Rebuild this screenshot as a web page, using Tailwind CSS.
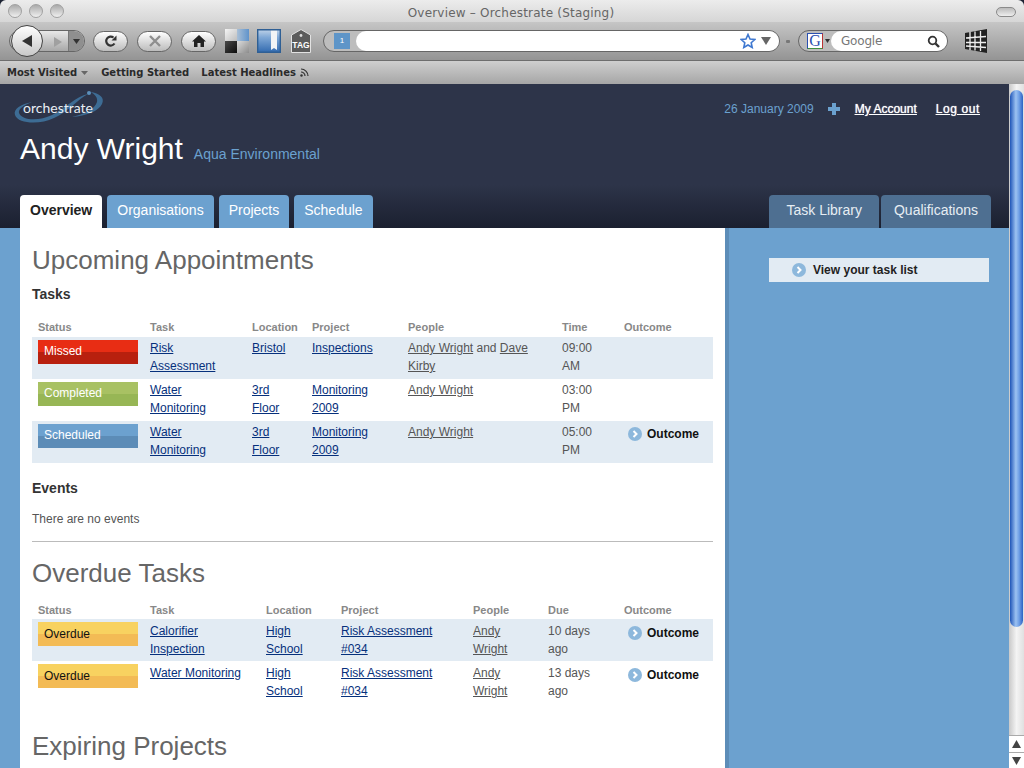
<!DOCTYPE html>
<html>
<head>
<meta charset="UTF-8">
<title>Overview - Orchestrate (Staging)</title>
<script src="https://cdn.jsdelivr.net/npm/@tailwindcss/browser@4"></script>
</head>
<body class="w-[1024px] h-[768px] overflow-hidden bg-[#1c2233] font-['Liberation_Sans',Arial,sans-serif] text-[12px] leading-[18px] text-[#555]">

<!-- browser chrome -->
<div class="h-[84px] flex flex-col rounded-t-[6px] overflow-hidden">
    <div class="h-[22px] shrink-0 relative flex items-center justify-center pt-[3px] pr-[2px] bg-gradient-to-b from-[#ececec] to-[#d6d6d6] font-['DejaVu_Sans',sans-serif] text-[12px] tracking-[0.2px] text-[#666]">
        <div class="absolute left-[8px] top-[4px] flex gap-[7px]">
            <span class="w-[14px] h-[14px] rounded-full border border-[#a0a0a0] bg-gradient-to-b from-[#aaa] to-[#f0f0f0]"></span>
            <span class="w-[14px] h-[14px] rounded-full border border-[#a0a0a0] bg-gradient-to-b from-[#aaa] to-[#f0f0f0]"></span>
            <span class="w-[14px] h-[14px] rounded-full border border-[#a0a0a0] bg-gradient-to-b from-[#aaa] to-[#f0f0f0]"></span>
        </div>
        <span>Overview – Orchestrate (Staging)</span>
        <span class="absolute right-[8px] top-[7px] w-[20px] h-[10px] rounded-full border border-[#8a8a8a] bg-gradient-to-b from-[#bbb] to-[#eee]"></span>
    </div>

    <div class="h-[39px] shrink-0 flex items-center pl-[9px] bg-gradient-to-b from-[#c6c6c6] to-[#949494] border-b border-[#6e6e6e]">
        <!-- back / forward -->
        <div class="relative w-[76px] h-[22px] rounded-full border border-[#666] bg-gradient-to-b from-[#e8e8e8] to-[#a8a8a8]">
            <div class="absolute left-[1px] top-[-6px] w-[32px] h-[32px] rounded-full border border-[#444] bg-gradient-to-b from-white to-[#c8c8c8] flex items-center justify-center">
                <svg width="12" height="14" viewBox="0 0 12 14"><path d="M11 1v12L1 7z" fill="#333"/></svg>
            </div>
            <svg class="absolute left-[43px] top-[5px]" width="10" height="12" viewBox="0 0 10 12"><path d="M1 1v10l8-5z" fill="#a0a0a0"/></svg>
            <div class="absolute right-0 top-0 w-[16px] h-full rounded-r-full bg-[#8f8f8f] border-l border-[#777]"></div>
            <svg class="absolute right-[4px] top-[8px]" width="7" height="5" viewBox="0 0 7 5"><path d="M0 0h7L3.500 5z" fill="#333"/></svg>
        </div>
        <!-- reload -->
        <div class="ml-[8px] w-[35px] h-[21px] rounded-full border border-[#666] bg-gradient-to-b from-white to-[#bcbcbc] flex items-center justify-center">
            <svg width="14" height="14" viewBox="0 0 14 14" fill="none"><path d="M10.500 9.500A4.500 4.500 0 1 1 9.500 3.500" stroke="#333" stroke-width="2.200"/><path d="M7.500 6.500h5v-5z" fill="#333"/></svg>
        </div>
        <!-- stop -->
        <div class="ml-[9px] w-[35px] h-[21px] rounded-full border border-[#666] bg-gradient-to-b from-white to-[#bcbcbc] flex items-center justify-center">
            <svg width="12" height="12" viewBox="0 0 12 12"><path d="M1 1l10 10M11 1L1 11" stroke="#8f8f8f" stroke-width="2.400"/></svg>
        </div>
        <!-- home -->
        <div class="ml-[9px] w-[35px] h-[21px] rounded-full border border-[#666] bg-gradient-to-b from-white to-[#bcbcbc] flex items-center justify-center">
            <svg width="14" height="12" viewBox="0 0 14 12"><path d="M7 0L0 6.500h2V12h3.500V8h3v4H12V6.500h2z" fill="#222"/></svg>
        </div>
        <!-- delicious -->
        <svg class="ml-[9px]" width="24" height="24" viewBox="0 0 24 24">
            <defs>
                <linearGradient id="dw" x1="0" y1="0" x2="1" y2="1"><stop offset="0" stop-color="#f4f4f4"/><stop offset="1" stop-color="#bdbdbd"/></linearGradient>
                <linearGradient id="db" x1="0" y1="0" x2="1" y2="0"><stop offset="0" stop-color="#a9bfd6"/><stop offset="1" stop-color="#5f93cb"/></linearGradient>
                <linearGradient id="dk" x1="0" y1="0" x2="1" y2="1"><stop offset="0" stop-color="#4a4a4a"/><stop offset="1" stop-color="#0c0c0c"/></linearGradient>
                <linearGradient id="dg" x1="0" y1="0" x2="1" y2="1"><stop offset="0" stop-color="#dcdcdc"/><stop offset="1" stop-color="#8c8c8c"/></linearGradient>
            </defs>
            <path d="M0 0h12v12H0z" fill="url(#dw)"/><path d="M12 0h12v12H12z" fill="url(#db)"/><path d="M0 12h12v12H0z" fill="url(#dk)"/><path d="M12 12h12v12H12z" fill="url(#dg)"/>
        </svg>
        <!-- bookmark -->
        <svg class="ml-[8px]" width="24" height="24" viewBox="0 0 24 24"><defs><linearGradient id="bk" x1="0" y1="0" x2="0" y2="1"><stop offset="0" stop-color="#c4d6ea"/><stop offset="0.35" stop-color="#7fa8d6"/><stop offset="1" stop-color="#2f68ae"/></linearGradient></defs><path d="M0 0h24v24H0z" fill="url(#bk)"/><path d="M14 0h6v21l-3-2-3 2z" fill="#f2f4f6"/><path d="M.7.700h22.600v22.600H.7z" fill="none" stroke="#2f5f94" stroke-width="1.400"/></svg>
        <!-- tag -->
        <svg class="ml-[10px]" width="20" height="24" viewBox="0 0 20 24"><path d="M10 .5L19.500 6v17.500H.5V6z" fill="#5c5c5c" stroke="#e2e2e2"/><circle cx="10" cy="6.500" r="1.400" fill="#ddd"/><text x="10" y="19" text-anchor="middle" font-family="Liberation Sans" font-size="8.500" font-weight="bold" fill="#fff">TAG</text></svg>
        <!-- url bar -->
        <div class="ml-[12px] w-[457px] h-[22px] rounded-full border border-[#666] bg-[#bdbdbd] flex items-center">
            <span class="ml-[10px] w-[16px] h-[16px] bg-[#5e95c8] text-white text-[8px] leading-[16px] text-center">1</span>
            <div class="ml-[6px] flex-1 h-[20px] rounded-full bg-white flex items-center justify-end pr-[8px] gap-[5px]">
                <svg width="16" height="16" viewBox="0 0 16 16"><path d="M8 1.500l2 4.500 4.800.500-3.600 3.200 1 4.800L8 12l-4.200 2.500 1-4.800L1.200 6.500 6 6z" fill="#fff" stroke="#3f78d0" stroke-width="1.600"/></svg>
                <svg width="10" height="8" viewBox="0 0 10 8"><path d="M0 0h10L5 8z" fill="#666"/></svg>
            </div>
        </div>
        <span class="ml-[6px] w-[4px] h-[3px] bg-[#777] rounded-[1px]"></span>
        <!-- search -->
        <div class="ml-[8px] w-[150px] h-[22px] rounded-full border border-[#666] bg-[#bdbdbd] flex items-center">
            <span class="ml-[8px] w-[16px] h-[16px] bg-white border border-[#3f8f3f] border-r-[#b33] border-t-[#2a50b0] border-l-[#2a50b0] font-['Liberation_Serif',serif] text-[16px] leading-[14px] text-center text-[#2a50b0]">G</span>
            <svg class="ml-[2px]" width="5" height="4" viewBox="0 0 5 4"><path d="M0 0h5L2.500 4z" fill="#333"/></svg>
            <div class="ml-[1px] flex-1 h-[20px] rounded-full bg-white flex items-center justify-between pl-[10px] pr-[7px] font-['DejaVu_Sans',sans-serif] text-[12px] tracking-[-0.2px] text-[#777]">
                <span>Google</span>
                <svg width="13" height="13" viewBox="0 0 13 13" fill="none"><circle cx="5.500" cy="5.500" r="3.800" stroke="#333" stroke-width="1.800"/><path d="M8.500 8.500l3.500 3.500" stroke="#333" stroke-width="2.400"/></svg>
            </div>
        </div>
        <!-- grid icon -->
        <svg class="ml-[17px]" width="22" height="24" viewBox="0 0 22 24"><path d="M0 4l22-4v24L0 20z" fill="#222"/><path d="M5 3v18M10 2.500v19M15.500 2v20M1 9l20-1.500M1 13.500h20M1 17l20 1.500" stroke="#eee" stroke-width="1.300"/></svg>
    </div>

    <div class="h-[23px] shrink-0 flex items-center pl-[7px] bg-gradient-to-b from-[#cfcfcf] to-[#a6a6a6] font-['DejaVu_Sans',sans-serif] font-bold text-[10px] text-[#2a2a2a]">
        <span>Most Visited</span>
        <svg class="ml-[4px]" width="7" height="4" viewBox="0 0 7 4"><path d="M0 0h7L3.500 4z" fill="#666"/></svg>
        <span class="ml-[13px]">Getting Started</span>
        <span class="ml-[12px]">Latest Headlines</span>
        <svg class="ml-[4px]" width="9" height="9" viewBox="0 0 9 9" fill="none"><circle cx="1.500" cy="7.500" r="1.200" fill="#333"/><path d="M1 4a4 4 0 0 1 4 4M1 1a7 7 0 0 1 7 7" stroke="#333" stroke-width="1.200"/></svg>
    </div>
</div>

<div class="flex h-[684px]">
    <div class="w-[1009px] shrink-0 flex flex-col overflow-hidden">

        <!-- site header -->
        <div class="h-[144px] shrink-0 flex flex-col bg-gradient-to-b from-[#2d3449] from-[70%] to-[#1b2030]">
            <div class="h-[111px] flex justify-between">
                <div class="pl-[20px] flex flex-col">
                    <div class="relative w-[100px] h-[40px] mt-[4px] -ml-[10px]">
                        <svg class="absolute left-0 top-0" width="100" height="40" viewBox="0 0 100 40">
                            <path d="M5 27C3 21 11 16 22 14 14 17 8 21 9 25 12 33 30 33 42 27 56 20 66 8 78 6 68 11 58 24 44 30 30 37 8 36 5 27z" fill="#3d6c94"/>
                            <path d="M80 4C90 5 95 10 92 16 89 23 76 28 62 29 74 26 85 21 87 14 88 10 85 6 80 4z" fill="#3d6c94"/>
                            <circle cx="79" cy="5" r="2" fill="#5b8fbb"/>
                        </svg>
                        <span class="absolute left-[13px] top-[11px] font-['Lato',sans-serif] text-[14px] leading-[18px] text-[#e8eef4]">orchestrate</span>
                    </div>
                    <div class="flex items-baseline mt-[2px]">
                        <span class="text-[30px] leading-[38px] text-white">Andy Wright</span>
                        <span class="ml-[11px] text-[14px] text-[#6ba1cf]">Aqua Environmental</span>
                    </div>
                </div>
                <div class="flex items-center h-[50px] pr-[29px] text-[12px]">
                    <span class="text-[#6ba1cf]">26 January 2009</span>
                    <svg class="ml-[14px]" width="12" height="12" viewBox="0 0 12 12"><path d="M4 0h4v4h4v4H8v4H4V8H0V4h4z" fill="#6ba1cf"/></svg>
                    <a class="ml-[15px] text-white underline [text-shadow:0_0_1px_#fff]">My Account</a>
                    <a class="ml-[19px] text-white underline tracking-[0.6px] [text-shadow:0_0_1px_#fff]">Log out</a>
                </div>
            </div>
            <div class="h-[33px] flex justify-between pl-[20px] pr-[18px] text-[14px] leading-[30px]">
                <div class="flex gap-[5px]">
                    <a class="px-[10px] rounded-t-[4px] bg-white text-[#222] font-bold">Overview</a>
                    <a class="px-[10px] rounded-t-[4px] bg-[#6ca1cf] text-white">Organisations</a>
                    <a class="px-[10px] rounded-t-[4px] bg-[#6ca1cf] text-white">Projects</a>
                    <a class="px-[10px] rounded-t-[4px] bg-[#6ca1cf] text-white">Schedule</a>
                </div>
                <div class="flex gap-[2px]">
                    <a class="px-[17px] rounded-t-[4px] bg-[#4e6f91] text-[#e6edf3]">Task Library</a>
                    <a class="px-[13px] rounded-t-[4px] bg-[#4e6f91] text-[#e6edf3]">Qualifications</a>
                </div>
            </div>
        </div>

        <!-- page body -->
        <div class="flex-1 flex bg-[#6ca1cf] pl-[20px] overflow-hidden">
            <div class="w-[705px] shrink-0 bg-white px-[12px] pt-[15px]">
                <h1 class="text-[26px] leading-[34px] text-[#666]">Upcoming Appointments</h1>
                <h2 class="mt-[8px] text-[14px] leading-[18px] font-bold text-[#333]">Tasks</h2>

                <table class="mt-[17px] w-[681px] table-fixed border-collapse">
                    <colgroup><col class="w-[112px]"><col class="w-[102px]"><col class="w-[60px]"><col class="w-[96px]"><col class="w-[154px]"><col class="w-[62px]"><col class="w-[95px]"></colgroup>
                    <thead>
                        <tr class="h-[17px] text-left text-[11px] leading-[14px] font-bold text-[#888]">
                            <th class="pl-[6px] pb-[3px]">Status</th><th class="pl-[6px] pb-[3px]">Task</th><th class="pl-[6px] pb-[3px]">Location</th><th class="pl-[6px] pb-[3px]">Project</th><th class="pl-[6px] pb-[3px]">People</th><th class="pl-[6px] pb-[3px]">Time</th><th class="pl-[6px] pb-[3px]">Outcome</th>
                        </tr>
                    </thead>
                    <tbody>
                        <tr class="h-[42px] align-top bg-[#e2ebf3]">
                            <td class="pl-[6px] pt-[3px]"><div class="w-[100px] h-[24px] pl-[6px] text-white leading-[22px] bg-[linear-gradient(#e82d14_50%,#b8200e_50%)]">Missed</div></td>
                            <td class="px-[6px] pt-[2px]"><a class="text-[#06307c] underline">Risk Assessment</a></td>
                            <td class="px-[6px] pt-[2px]"><a class="text-[#06307c] underline">Bristol</a></td>
                            <td class="px-[6px] pt-[2px]"><a class="text-[#06307c] underline">Inspections</a></td>
                            <td class="px-[6px] pt-[2px]"><a class="underline">Andy Wright</a> and <a class="underline">Dave Kirby</a></td>
                            <td class="px-[6px] pt-[2px]">09:00 AM</td>
                            <td class="px-[6px] pt-[2px]"></td>
                        </tr>
                        <tr class="h-[42px] align-top">
                            <td class="pl-[6px] pt-[3px]"><div class="w-[100px] h-[24px] pl-[6px] text-white leading-[22px] bg-[linear-gradient(#a8c163_50%,#97b655_50%)]">Completed</div></td>
                            <td class="px-[6px] pt-[2px]"><a class="text-[#06307c] underline">Water Monitoring</a></td>
                            <td class="pl-[6px] pr-[7px] pt-[2px]"><a class="text-[#06307c] underline">3rd Floor</a></td>
                            <td class="px-[6px] pt-[2px]"><a class="text-[#06307c] underline">Monitoring 2009</a></td>
                            <td class="px-[6px] pt-[2px]"><a class="underline">Andy Wright</a></td>
                            <td class="px-[6px] pt-[2px]">03:00 PM</td>
                            <td class="px-[6px] pt-[2px]"></td>
                        </tr>
                        <tr class="h-[42px] align-top bg-[#e2ebf3]">
                            <td class="pl-[6px] pt-[3px]"><div class="w-[100px] h-[24px] pl-[6px] text-white leading-[22px] bg-[linear-gradient(#6ca1cf_50%,#5c8cb7_50%)]">Scheduled</div></td>
                            <td class="px-[6px] pt-[2px]"><a class="text-[#06307c] underline">Water Monitoring</a></td>
                            <td class="pl-[6px] pr-[7px] pt-[2px]"><a class="text-[#06307c] underline">3rd Floor</a></td>
                            <td class="px-[6px] pt-[2px]"><a class="text-[#06307c] underline">Monitoring 2009</a></td>
                            <td class="px-[6px] pt-[2px]"><a class="underline">Andy Wright</a></td>
                            <td class="px-[6px] pt-[2px]">05:00 PM</td>
                            <td class="pl-[10px] pt-[4px]"><div class="flex items-center gap-[5px] font-bold text-[#111]"><svg width="14" height="14" viewBox="0 0 14 14"><circle cx="7" cy="7" r="7" fill="#8db8dc"/><path d="M5.500 4l3 3-3 3" fill="none" stroke="#fff" stroke-width="2"/></svg>Outcome</div></td>
                        </tr>
                    </tbody>
                </table>

                <h2 class="mt-[16px] text-[14px] leading-[18px] font-bold text-[#333]">Events</h2>
                <p class="mt-[13px]">There are no events</p>
                <hr class="mt-[13px] border-[#bbb]">

                <h1 class="mt-[14px] text-[26px] leading-[34px] text-[#666]">Overdue Tasks</h1>

                <table class="mt-[12px] w-[681px] table-fixed border-collapse">
                    <colgroup><col class="w-[112px]"><col class="w-[116px]"><col class="w-[75px]"><col class="w-[132px]"><col class="w-[75px]"><col class="w-[76px]"><col class="w-[95px]"></colgroup>
                    <thead>
                        <tr class="h-[17px] text-left text-[11px] leading-[14px] font-bold text-[#888]">
                            <th class="pl-[6px] pb-[1px]">Status</th><th class="pl-[6px] pb-[1px]">Task</th><th class="pl-[6px] pb-[1px]">Location</th><th class="pl-[6px] pb-[1px]">Project</th><th class="pl-[6px] pb-[1px]">People</th><th class="pl-[6px] pb-[1px]">Due</th><th class="pl-[6px] pb-[1px]">Outcome</th>
                        </tr>
                    </thead>
                    <tbody>
                        <tr class="h-[42px] align-top bg-[#e2ebf3]">
                            <td class="pl-[6px] pt-[3px]"><div class="w-[100px] h-[24px] pl-[6px] text-[#111] leading-[24px] bg-[linear-gradient(#f8d260_50%,#f3bb55_50%)]">Overdue</div></td>
                            <td class="px-[6px] pt-[3px]"><a class="text-[#06307c] underline">Calorifier Inspection</a></td>
                            <td class="px-[6px] pt-[3px]"><a class="text-[#06307c] underline">High School</a></td>
                            <td class="px-[6px] pt-[3px]"><a class="text-[#06307c] underline">Risk Assessment #034</a></td>
                            <td class="px-[6px] pt-[3px]"><a class="underline">Andy Wright</a></td>
                            <td class="px-[6px] pt-[3px]">10 days ago</td>
                            <td class="pl-[10px] pt-[5px]"><div class="flex items-center gap-[5px] font-bold text-[#111]"><svg width="14" height="14" viewBox="0 0 14 14"><circle cx="7" cy="7" r="7" fill="#8db8dc"/><path d="M5.500 4l3 3-3 3" fill="none" stroke="#fff" stroke-width="2"/></svg>Outcome</div></td>
                        </tr>
                        <tr class="h-[42px] align-top">
                            <td class="pl-[6px] pt-[3px]"><div class="w-[100px] h-[24px] pl-[6px] text-[#111] leading-[24px] bg-[linear-gradient(#f8d260_50%,#f3bb55_50%)]">Overdue</div></td>
                            <td class="px-[6px] pt-[3px]"><a class="text-[#06307c] underline">Water Monitoring</a></td>
                            <td class="px-[6px] pt-[3px]"><a class="text-[#06307c] underline">High School</a></td>
                            <td class="px-[6px] pt-[3px]"><a class="text-[#06307c] underline">Risk Assessment #034</a></td>
                            <td class="px-[6px] pt-[3px]"><a class="underline">Andy Wright</a></td>
                            <td class="px-[6px] pt-[3px]">13 days ago</td>
                            <td class="pl-[10px] pt-[5px]"><div class="flex items-center gap-[5px] font-bold text-[#111]"><svg width="14" height="14" viewBox="0 0 14 14"><circle cx="7" cy="7" r="7" fill="#8db8dc"/><path d="M5.500 4l3 3-3 3" fill="none" stroke="#fff" stroke-width="2"/></svg>Outcome</div></td>
                        </tr>
                    </tbody>
                </table>

                <h1 class="mt-[26px] text-[26px] leading-[34px] text-[#666]">Expiring Projects</h1>
            </div>

            <!-- sidebar -->
            <div class="flex-1 border-l-[4px] border-[#5d8db8] pl-[40px] pt-[30px]">
                <div class="w-[220px] h-[24px] bg-[#e2ebf3] pl-[23px] flex items-center gap-[7px] font-bold text-[#222]">
                    <svg width="14" height="14" viewBox="0 0 14 14"><circle cx="7" cy="7" r="7" fill="#8db8dc"/><path d="M5.500 4l3 3-3 3" fill="none" stroke="#fff" stroke-width="2"/></svg>
                    View your task list
                </div>
            </div>
        </div>
    </div>

    <!-- scrollbar -->
    <div class="w-[15px] shrink-0 flex flex-col bg-gradient-to-r from-[#c9c9c9] via-[#f4f4f4] to-[#e0e0e0]">
        <div class="flex-1 pt-[6px] pb-[108px] px-[1px] rounded-b-full">
            <div class="h-full rounded-full bg-[linear-gradient(90deg,#1f55b8,#9cc2f2_45%,#6f9fe6_70%,#2a62c4)]"></div>
        </div>
        <div class="h-[17px] flex items-center justify-center border-t border-[#aaa] bg-white"><svg width="9" height="8" viewBox="0 0 9 8"><path d="M4.500 0L9 8H0z" fill="#444"/></svg></div>
        <div class="h-[16px] flex items-center justify-center border-t border-[#aaa] bg-white"><svg width="9" height="8" viewBox="0 0 9 8"><path d="M0 0h9L4.500 8z" fill="#444"/></svg></div>
    </div>
</div>

</body>
</html>
